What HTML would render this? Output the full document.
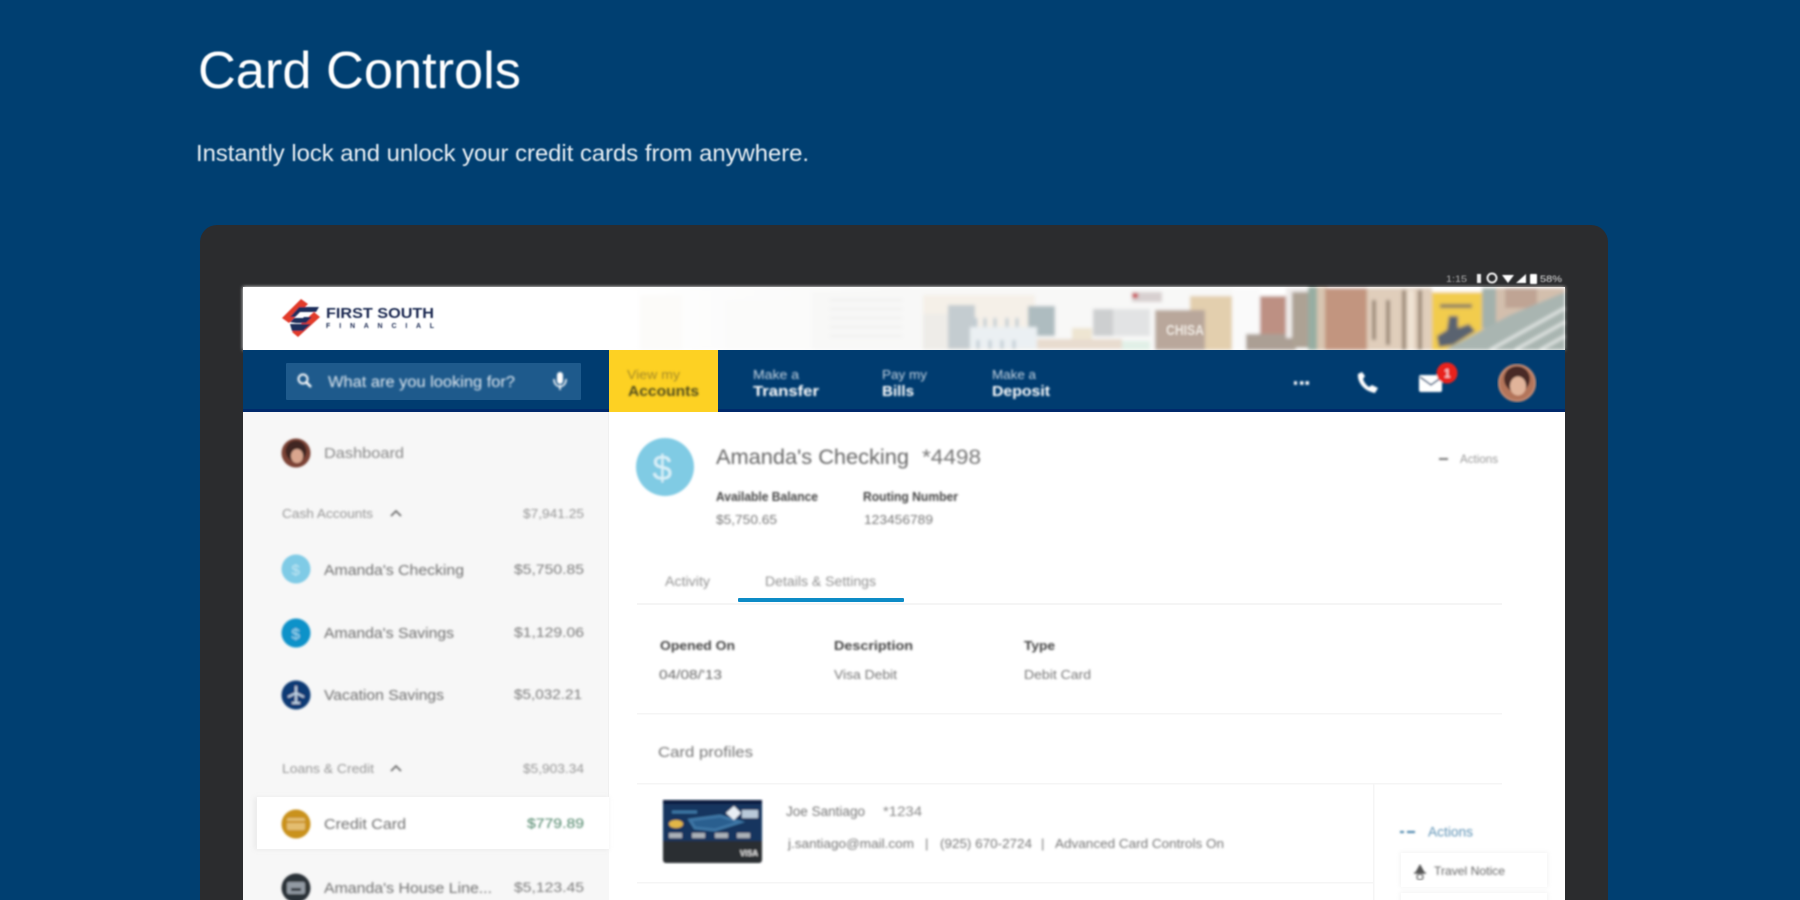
<!DOCTYPE html>
<html><head><meta charset="utf-8"><title>Card Controls</title>
<style>
html,body{margin:0;padding:0;background:#003f71;width:1800px;height:900px;overflow:hidden}
svg{display:block}
text{font-family:"Liberation Sans",Arial,sans-serif}
.s{font-size:14.5px;fill:#6f6f6f}
.g{font-size:13px;fill:#979797}
.a{font-size:14px;fill:#7c7c7c}
.b{font-size:12.5px;fill:#444;font-weight:bold}
.v{font-size:12.5px;fill:#777}
.n1{font-size:13px;fill:#c5d4e2}
.n2{font-size:15px;fill:#fff;font-weight:bold}
</style></head><body>
<svg width="1800" height="900" viewBox="0 0 1800 900" xmlns="http://www.w3.org/2000/svg">
<defs>
<filter id="b1" x="-2%" y="-2%" width="104%" height="104%"><feGaussianBlur stdDeviation="1"/></filter>
<filter id="b2" x="-5%" y="-20%" width="110%" height="140%"><feGaussianBlur stdDeviation="0.7"/></filter>
<filter id="b3" x="-5%" y="-5%" width="110%" height="110%"><feGaussianBlur stdDeviation="1.8"/></filter>
<filter id="sh" x="-10%" y="-20%" width="120%" height="140%"><feGaussianBlur stdDeviation="2"/></filter>
<linearGradient id="fade" x1="0" x2="1" y1="0" y2="0"><stop offset="0" stop-color="#fff"/><stop offset="1" stop-color="#f8f8f7"/></linearGradient>
</defs>
<rect width="1800" height="900" fill="#003f71"/>
<g filter="url(#b2)">
<text x="198" y="88" font-size="52" fill="#fff" textLength="323" lengthAdjust="spacingAndGlyphs">Card Controls</text>
<text x="196" y="161" font-size="23" fill="#eaf0f4" textLength="613" lengthAdjust="spacingAndGlyphs">Instantly lock and unlock your credit cards from anywhere.</text>
</g>
<rect x="200" y="225" width="1408" height="700" rx="17" fill="#2b2c2e"/>
<!-- status bar -->
<g filter="url(#b2)">
<text x="1446" y="282" font-size="9.5" fill="#aaa" textLength="21" lengthAdjust="spacingAndGlyphs">1:15</text>
<rect x="1477" y="274" width="4" height="9" fill="#eee"/>
<circle cx="1492" cy="278" r="4.5" fill="none" stroke="#eee" stroke-width="2"/>
<path d="M1502 275h12l-6 8z" fill="#fff"/><path d="M1516 283l10-9v9z" fill="#fff"/>
<rect x="1530" y="274" width="7" height="10" rx="1" fill="#fff"/>
<text x="1540" y="282" font-size="9.5" fill="#ddd" textLength="22" lengthAdjust="spacingAndGlyphs">58%</text>
</g>
<!-- screen -->
<rect x="243" y="287" width="1322" height="613" fill="#fff"/>
<!-- header image -->
<g filter="url(#b3)">
<rect x="243" y="287" width="1322" height="63" fill="#fff"/>
<rect x="610" y="287" width="300" height="63" fill="url(#fade)"/>
<rect x="640" y="295" width="42" height="55" fill="#fcfbf9"/>
<rect x="725" y="300" width="80" height="50" fill="#fbfbfa"/>
<rect x="812" y="292" width="92" height="58" fill="#f8f8f7"/>
<path d="M830 300h72M830 309h72M830 318h72M830 327h72M830 336h72" stroke="#ebebe9" stroke-width="1.5"/>
<rect x="904" y="288" width="330" height="62" fill="#f8f8f7"/>
<rect x="923" y="295" width="112" height="55" fill="#f5f0e8"/>
<rect x="923" y="314" width="25" height="36" fill="#eeece8"/>
<rect x="948" y="305" width="27" height="44" fill="#c4ccd0"/>
<rect x="1028" y="306" width="27" height="30" fill="#aebcc0"/>
<rect x="970" y="327" width="67" height="22" fill="#ebf0f3"/>
<path d="M976 318v9M985 318v9M995 318v9M1007 318v9M1017 318v9M978 340v9M990 340v9M1002 340v9M1014 340v9" stroke="#bfcbd3" stroke-width="3"/>
<rect x="1037" y="339" width="85" height="10" fill="#e8dccf"/>
<rect x="1072" y="328" width="20" height="11" fill="#eee5d2"/>
<rect x="1122" y="341" width="28" height="9" fill="#e1f0e7"/>
<rect x="1093" y="309" width="57" height="27" fill="#e2e3e4"/>
<rect x="1093" y="309" width="20" height="27" fill="#cdcfd0"/>
<rect x="1132" y="292" width="30" height="10" fill="#d8d0d0"/>
<rect x="1132" y="293" width="6" height="5" fill="#c8404a"/>
<rect x="1190" y="296" width="42" height="54" fill="#e3cfae"/>
<rect x="1155" y="310" width="50" height="40" fill="#b9a79b"/>
<rect x="1232" y="288" width="28" height="62" fill="#fafafa"/>
<rect x="1260" y="296" width="28" height="54" fill="#bd9083"/>
<rect x="1246" y="334" width="50" height="16" fill="#ab9f94"/>
<rect x="1286" y="288" width="22" height="50" fill="#efeceb"/>
<rect x="1292" y="292" width="18" height="56" fill="#ad a294" opacity="0"/>
<rect x="1292" y="292" width="18" height="56" fill="#ada294"/>
<rect x="1308" y="287" width="9" height="63" fill="#97ada2"/>
<rect x="1317" y="287" width="10" height="63" fill="#d8c5b0"/>
<rect x="1325" y="288" width="42" height="62" fill="#c2957f"/>
<rect x="1367" y="288" width="65" height="62" fill="#e0cebb"/>
<path d="M1374 300v40M1388 300v45M1404 290v60M1420 290v60" stroke="#9a8877" stroke-width="4"/>
<path d="M1411 290v60" stroke="#f0e4d5" stroke-width="6"/>
<rect x="1432" y="292" width="50" height="58" fill="#f2cc4e"/>
<rect x="1482" y="288" width="83" height="62" fill="#d3bfad"/>
<rect x="1482" y="288" width="14" height="40" fill="#a3b1ac"/>
<rect x="1505" y="288" width="32" height="20" fill="#bfa494"/>
<path d="M1437 336l10-6 2-14h9v12l11-4 6 7-22 14-14 2z" fill="#5a6470"/>
<path d="M1440 306h32" stroke="#8a7e64" stroke-width="4"/>
<polygon points="1445,350 1510,315 1565,292 1565,350" fill="#a9b5b1"/>
<path d="M1490 350l75-42M1515 350l50-28M1540 350l25-14" stroke="#e4e8e6" stroke-width="3" fill="none"/>
</g>
<g filter="url(#b1)"><text x="1166" y="335" font-size="15" font-weight="bold" fill="#efe9e2" textLength="38" lengthAdjust="spacingAndGlyphs">CHISA</text></g>
<!-- logo -->
<g filter="url(#b2)">
<polygon points="282,318 301,299 308,304 289,323" fill="#e23a2a"/>
<polygon points="298,337 320,317 314,312 292,332" fill="#e23a2a"/>
<path d="M299 307h20l-3 5h-16l-5 5h17l-6 6h-10l-6-1 4-4h9l1-1h-14z" fill="#1f2f5c"/>
<polygon points="290,324 311,324 303,331 292,331" fill="#1f2f5c"/>
<text x="326" y="318" font-size="15" font-weight="bold" fill="#1e2c52" textLength="108" lengthAdjust="spacingAndGlyphs">FIRST SOUTH</text>
<text x="326" y="328" font-size="7" font-weight="bold" fill="#1e2c52" textLength="108">F I N A N C I A L</text>
</g>
<!-- nav -->
<rect x="243" y="350" width="1322" height="62" fill="#003c70"/>
<rect x="243" y="409" width="1322" height="3" fill="#00296b"/>
<rect x="286" y="363" width="295" height="37" rx="1" fill="#1e5a8c"/>
<rect x="609" y="350" width="109" height="62" fill="#fdd123"/>
<g filter="url(#b1)">
<circle cx="303" cy="379" r="4.5" fill="none" stroke="#fff" stroke-width="2"/><path d="M306 382l5 5" stroke="#fff" stroke-width="2.5"/>
<text x="328" y="387" font-size="15.5" fill="#e3ebf2" textLength="187" lengthAdjust="spacingAndGlyphs">What are you looking for?</text>
<rect x="557" y="372" width="6" height="12" rx="3" fill="#fff"/><path d="M554 379c0 10 12 10 12 0M560 385v5" stroke="#fff" stroke-width="1.6" fill="none"/>
<text x="627" y="379" class="n1" style="fill:#a58a28" textLength="53" lengthAdjust="spacingAndGlyphs">View my</text>
<text x="628" y="396" class="n2" style="fill:#55501e" textLength="71" lengthAdjust="spacingAndGlyphs">Accounts</text>
<text x="753" y="379" class="n1" textLength="46" lengthAdjust="spacingAndGlyphs">Make a</text>
<text x="753" y="396" class="n2" textLength="66" lengthAdjust="spacingAndGlyphs">Transfer</text>
<text x="882" y="379" class="n1" textLength="45" lengthAdjust="spacingAndGlyphs">Pay my</text>
<text x="882" y="396" class="n2" textLength="32" lengthAdjust="spacingAndGlyphs">Bills</text>
<text x="992" y="379" class="n1" textLength="44" lengthAdjust="spacingAndGlyphs">Make a</text>
<text x="992" y="396" class="n2" textLength="58" lengthAdjust="spacingAndGlyphs">Deposit</text>
<path d="M1294 383h3M1300 383h11" stroke="#fff" stroke-width="3.5" stroke-dasharray="3.5 2"/>
<path d="M1358 374c-1 7 5 17 17 19l3-5-6-3-3 2c-3-2-5-5-6-8l2-3-3-4z" fill="#fff"/>
<rect x="1419" y="375" width="23" height="17" rx="2" fill="#fff"/><path d="M1420 377l11 8 11-8" stroke="#003c70" stroke-width="1.5" fill="none"/>
<circle cx="1447" cy="373" r="10.5" fill="#e8201f"/>
<text x="1444" y="377.5" font-size="11.5" font-weight="bold" fill="#f8cfcf">1</text>
</g>
<g filter="url(#b1)">
<circle cx="1517" cy="383" r="19" fill="#b3745a"/><circle cx="1517" cy="379" r="13" fill="#4a2a26"/><ellipse cx="1518" cy="386" rx="8" ry="9.5" fill="#e1b49a"/>
<circle cx="1517" cy="383" r="18" fill="none" stroke="#c38a73" stroke-width="2"/>
</g>
<!-- sidebar -->
<rect x="243" y="412" width="366" height="488" fill="#f7f7f7"/>
<rect x="608" y="412" width="1" height="385" fill="#f0f0f0"/>
<rect x="254" y="797" width="355" height="53" fill="#e2e2e2" opacity=".5" filter="url(#sh)"/>
<rect x="257" y="797" width="352" height="52" fill="#fff"/>
<g filter="url(#b1)">
<circle cx="296" cy="453" r="14.5" fill="#7c4336"/><circle cx="296" cy="451" r="10.5" fill="#3f2522"/><ellipse cx="297" cy="456" rx="6" ry="7" fill="#d9a68e"/>
<text x="324" y="458" class="s" style="fill:#888" textLength="80" lengthAdjust="spacingAndGlyphs">Dashboard</text>
<text x="282" y="518" class="g" textLength="91" lengthAdjust="spacingAndGlyphs">Cash Accounts</text>
<path d="M391 516l5-5 5 5" stroke="#666" stroke-width="1.6" fill="none"/>
<text x="523" y="518" class="g" textLength="61" lengthAdjust="spacingAndGlyphs">$7,941.25</text>
<circle cx="296" cy="569" r="14.5" fill="#7fcbe6"/><text x="291.500" y="575" font-size="15" fill="#bfe6f2">$</text>
<text x="324" y="575" class="s" textLength="140" lengthAdjust="spacingAndGlyphs">Amanda's Checking</text>
<text x="514" y="574" class="a" textLength="70" lengthAdjust="spacingAndGlyphs">$5,750.85</text>
<circle cx="296" cy="633" r="14.5" fill="#1192c9"/><text x="291.500" y="639" font-size="15" fill="#9fd8ef">$</text>
<text x="324" y="638" class="s" textLength="130" lengthAdjust="spacingAndGlyphs">Amanda's Savings</text>
<text x="514" y="637" class="a" textLength="70" lengthAdjust="spacingAndGlyphs">$1,129.06</text>
<circle cx="296" cy="695" r="14.5" fill="#0e3a74"/><path d="M296 686v18M288 697l8-4 8 4M292 703h8" stroke="#c0d2e4" stroke-width="2" fill="none"/>
<text x="324" y="700" class="s" textLength="120" lengthAdjust="spacingAndGlyphs">Vacation Savings</text>
<text x="514" y="699" class="a" textLength="68" lengthAdjust="spacingAndGlyphs">$5,032.21</text>
<text x="282" y="773" class="g" textLength="92" lengthAdjust="spacingAndGlyphs">Loans &amp; Credit</text>
<path d="M391 771l5-5 5 5" stroke="#666" stroke-width="1.6" fill="none"/>
<text x="523" y="773" class="g" textLength="61" lengthAdjust="spacingAndGlyphs">$5,903.34</text>
<circle cx="296" cy="824" r="14.5" fill="#c9921f"/><rect x="287" y="818" width="18" height="12" rx="2" fill="#e3bd6f"/><rect x="287" y="821" width="18" height="2" fill="#c9921f"/>
<text x="324" y="829" class="s" textLength="82" lengthAdjust="spacingAndGlyphs">Credit Card</text>
<text x="527" y="828" class="a" style="fill:#4d8468" textLength="57" lengthAdjust="spacingAndGlyphs">$779.89</text>
<circle cx="296" cy="888" r="14.5" fill="#2a3038"/><rect x="287" y="882" width="18" height="12" rx="2" fill="#929aa3"/><rect x="291" y="888" width="10" height="3" fill="#2a3038"/>
<text x="324" y="893" class="s" textLength="168" lengthAdjust="spacingAndGlyphs">Amanda's House Line...</text>
<text x="514" y="892" class="a" textLength="70" lengthAdjust="spacingAndGlyphs">$5,123.45</text>
</g>
<!-- main -->
<g filter="url(#b1)">
<circle cx="665" cy="467" r="29" fill="#80cbe4"/>
<text x="652.500" y="480" font-size="35" fill="#d9f0f8">$</text>
<text x="716" y="464" font-size="21" fill="#666" textLength="193" lengthAdjust="spacingAndGlyphs">Amanda's Checking</text>
<text x="922" y="464" font-size="21" fill="#777" textLength="59" lengthAdjust="spacingAndGlyphs">*4498</text>
<text x="716" y="501" class="b" textLength="102" lengthAdjust="spacingAndGlyphs">Available Balance</text>
<text x="863" y="501" class="b" textLength="95" lengthAdjust="spacingAndGlyphs">Routing Number</text>
<text x="716" y="524" class="v" textLength="61" lengthAdjust="spacingAndGlyphs">$5,750.65</text>
<text x="864" y="524" class="v" textLength="69" lengthAdjust="spacingAndGlyphs">123456789</text>
<path d="M1439 459h9" stroke="#777" stroke-width="2"/>
<text x="1460" y="463" font-size="12" fill="#999" textLength="38" lengthAdjust="spacingAndGlyphs">Actions</text>
<text x="665" y="586" font-size="13.500" fill="#929292" textLength="45" lengthAdjust="spacingAndGlyphs">Activity</text>
<text x="765" y="586" font-size="13.500" fill="#929292" textLength="111" lengthAdjust="spacingAndGlyphs">Details &amp; Settings</text>
<text x="660" y="650" class="b" style="font-size:13px" textLength="75" lengthAdjust="spacingAndGlyphs">Opened On</text>
<text x="834" y="650" class="b" style="font-size:13px" textLength="79" lengthAdjust="spacingAndGlyphs">Description</text>
<text x="1024" y="650" class="b" style="font-size:13px" textLength="31" lengthAdjust="spacingAndGlyphs">Type</text>
<text x="659" y="679" class="v" style="font-size:13px;fill:#666" textLength="63" lengthAdjust="spacingAndGlyphs">04/08/'13</text>
<text x="834" y="679" class="v" style="font-size:13px" textLength="63" lengthAdjust="spacingAndGlyphs">Visa Debit</text>
<text x="1024" y="679" class="v" style="font-size:13px" textLength="67" lengthAdjust="spacingAndGlyphs">Debit Card</text>
<text x="658" y="757" font-size="14.500" fill="#777" textLength="95" lengthAdjust="spacingAndGlyphs">Card profiles</text>
<text x="786" y="816" font-size="13.500" fill="#777" textLength="79" lengthAdjust="spacingAndGlyphs">Joe Santiago</text>
<text x="883" y="816" font-size="13.500" fill="#888" textLength="39" lengthAdjust="spacingAndGlyphs">*1234</text>
<text x="788" y="848" font-size="13" fill="#777" textLength="126" lengthAdjust="spacingAndGlyphs">j.santiago@mail.com</text>
<text x="925" y="848" font-size="13" fill="#777">|</text>
<text x="940" y="848" font-size="13" fill="#777" textLength="92" lengthAdjust="spacingAndGlyphs">(925) 670-2724</text>
<text x="1041" y="848" font-size="13" fill="#777">|</text>
<text x="1055" y="848" font-size="13" fill="#777" textLength="169" lengthAdjust="spacingAndGlyphs">Advanced Card Controls On</text>
<path d="M1400 832h4M1407 832h8" stroke="#3f7ea6" stroke-width="2"/>
<text x="1428" y="836.500" font-size="13.500" fill="#5e93b5" textLength="45" lengthAdjust="spacingAndGlyphs">Actions</text>
</g>
<g fill="#f5f5f5">
<rect x="637" y="603" width="865" height="2"/>
<rect x="637" y="713" width="865" height="1.500"/>
<rect x="637" y="783" width="865" height="1.500"/>
<rect x="637" y="882" width="736" height="1.500"/>
<rect x="1373" y="783" width="1.500" height="117"/>
</g>
<rect x="738" y="598" width="166" height="4" rx="1" fill="#0d8bc6"/>
<!-- card -->
<g filter="url(#b1)">
<rect x="663" y="800" width="99" height="63" rx="3" fill="#2c2d31"/>
<path d="M663 803a3 3 0 0 1 3-3h93a3 3 0 0 1 3 3v38h-99z" fill="#17365f"/>
<rect x="663" y="800" width="99" height="4" fill="#0d1d3f"/>
<path d="M672 812h25M690 820l30-4 20 6-25 8-20-2z" stroke="#3c76a5" stroke-width="3" fill="#2a5f8f"/>
<path d="M726 813l8-7 7 7-7 7z" fill="#e8eef4"/>
<rect x="742" y="810" width="16" height="8" fill="#b9c9d9"/>
<ellipse cx="676" cy="824" rx="7" ry="4" fill="#e2b646"/>
<rect x="669" y="833" width="13" height="5" fill="#aab0b8"/><rect x="692" y="833" width="13" height="5" fill="#aab0b8"/><rect x="715" y="833" width="13" height="5" fill="#aab0b8"/><rect x="737" y="833" width="13" height="5" fill="#aab0b8"/>
<text x="740" y="856" font-size="8" font-weight="bold" fill="#e6e6e6" textLength="18" lengthAdjust="spacingAndGlyphs">VISA</text>
</g>
<!-- popup -->
<rect x="1400" y="852" width="148" height="35" fill="#ddd" opacity=".35" filter="url(#sh)"/>
<rect x="1400" y="892" width="148" height="12" fill="#ddd" opacity=".35" filter="url(#sh)"/>
<rect x="1401" y="853" width="146" height="34" fill="#fff"/>
<rect x="1401" y="893" width="146" height="7" fill="#fff"/>
<g filter="url(#b1)">
<path d="M1420 864l5 9h-10z" fill="#555"/><path d="M1414 873h12" stroke="#555" stroke-width="1.500"/><circle cx="1420" cy="877" r="3" fill="none" stroke="#777" stroke-width="1.500"/>
<text x="1434" y="875" font-size="12" fill="#666" textLength="71" lengthAdjust="spacingAndGlyphs">Travel Notice</text>
</g>
</svg>
</body></html>
